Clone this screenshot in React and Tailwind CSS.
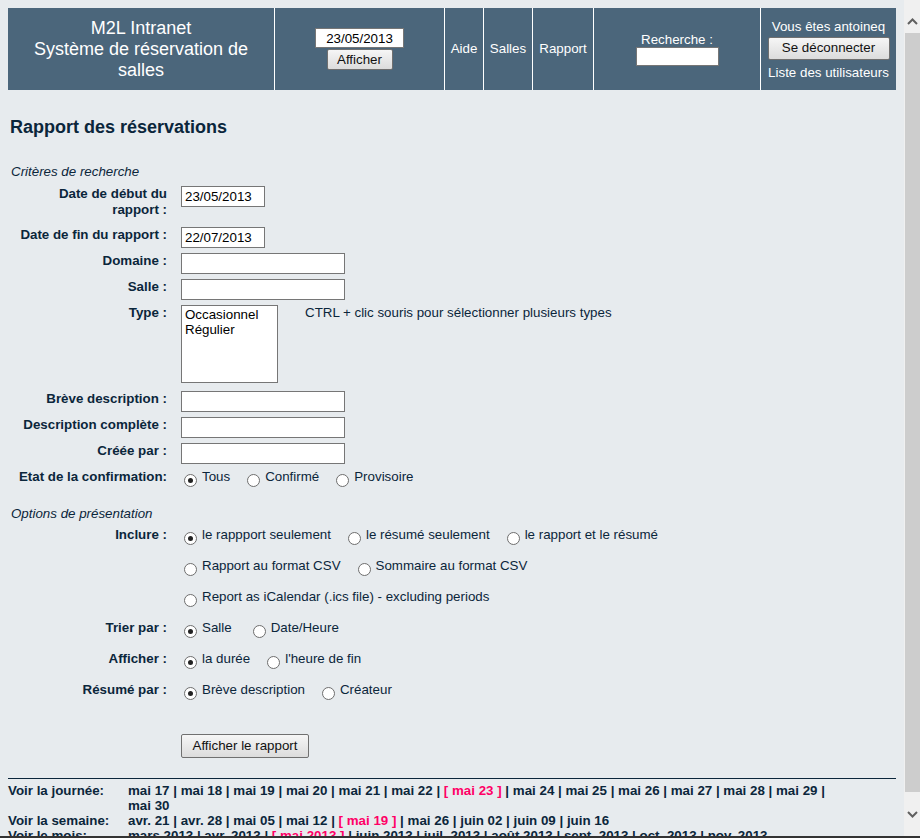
import React from "react";

const Radio = ({ checked }) => (
  <span className="mt-[5px] ml-[3px] mr-[5px] flex h-[13px] w-[13px] shrink-0 items-center justify-center rounded-full border border-[#6e6e6e] bg-white">
    {checked ? <span className="h-[5px] w-[5px] rounded-full bg-[#222]" /> : null}
  </span>
);

const Opt = ({ checked, children, wide }) => (
  <span className={wide ? "mr-[18px] flex items-start" : "mr-[14px] flex items-start"}>
    <Radio checked={checked} />
    <span className="leading-[16px] whitespace-nowrap">{children}</span>
  </span>
);

const Label = ({ children }) => (
  <div className="ml-[9px] mr-[14px] w-[150px] shrink-0 text-right font-bold leading-[16px]">{children}</div>
);

const Field = ({ value, short }) => (
  <input
    readOnly
    value={value || ""}
    className={
      short
        ? "h-[21px] w-[84px] shrink-0 border border-[#767676] bg-white px-[3px] text-[13.33px] text-black outline-none"
        : "h-[21px] w-[164px] shrink-0 border border-[#767676] bg-white px-[3px] text-[13.33px] text-black outline-none"
    }
  />
);

const Sep = () => <span> | </span>;
const Cur = ({ children }) => <span className="text-[#ff0066]">[ {children} ]</span>;

const NavLine = ({ items }) =>
  items.map((it, i) => (
    <React.Fragment key={i}>
      {i > 0 ? <Sep /> : null}
      {it.startsWith("*") ? <Cur>{it.slice(1)}</Cur> : <span>{it}</span>}
    </React.Fragment>
  ));

const Chevron = ({ down }) => (
  <svg width="11" height="7" viewBox="0 0 11 7">
    <polyline
      points={down ? "1,1 5.5,5.5 10,1" : "1,6 5.5,1.5 10,6"}
      fill="none"
      stroke="#606060"
      strokeWidth="2"
    />
  </svg>
);

const Btn = ({ children, cls }) => (
  <div
    className={
      "flex items-center justify-center rounded-[2px] border border-[#707070] bg-linear-to-b from-[#f6f6f6] to-[#dcdcdc] text-[13.33px] text-[#111] " +
      cls
    }
  >
    {children}
  </div>
);

export default function App() {
  return (
    <div className="flex h-[838px] w-[920px] flex-col overflow-hidden bg-[#e7ebee] font-['Liberation_Sans',Arial,sans-serif] text-[13.33px] text-[#0b263b]">
      <div className="flex h-[836px] overflow-hidden">
        <div className="w-[904px] shrink-0 overflow-hidden px-[8px] pt-[8px]">
          {/* Header banner */}
          <div className="flex h-[82px] bg-[#4b667b] text-white">
            <div className="flex w-[266px] shrink-0 items-center justify-center text-center text-[18px] leading-[21px]">
              <div>
                M2L Intranet
                <br />
                Système de réservation de
                <br />
                salles
              </div>
            </div>
            <div className="flex w-[170px] shrink-0 flex-col items-center justify-center border-l border-white">
              <input
                readOnly
                value="23/05/2013"
                className="h-[20px] w-[89px] border border-[#767676] bg-white text-center text-[13.33px] text-black outline-none"
              />
              <Btn cls="mt-[1px] h-[21px] w-[66px]">Afficher</Btn>
            </div>
            <div className="flex w-[39px] shrink-0 items-center justify-center border-l border-white">Aide</div>
            <div className="flex w-[49px] shrink-0 items-center justify-center border-l border-white">Salles</div>
            <div className="flex w-[61px] shrink-0 items-center justify-center border-l border-white">Rapport</div>
            <div className="flex w-[167px] shrink-0 flex-col items-center justify-center border-l border-white">
              <div className="leading-[15px]">Recherche :</div>
              <div className="h-[19px] w-[83px] border border-[#767676] bg-white" />
            </div>
            <div className="flex flex-1 flex-col items-center justify-center border-l border-white">
              <div className="leading-[15px]">Vous êtes antoineq</div>
              <Btn cls="mt-[3px] h-[23px] w-[122px]">Se déconnecter</Btn>
              <div className="mt-[5px] leading-[15px]">Liste des utilisateurs</div>
            </div>
          </div>

          <h2 className="mt-[27px] ml-[2px] text-[18px] font-bold leading-[21px]">Rapport des réservations</h2>

          <div className="mt-[26px] ml-[3px] italic leading-[16px]">Critères de recherche</div>

          <div className="mt-[6px] flex items-start">
            <Label>
              Date de début du
              <br />
              rapport&nbsp;:
            </Label>
            <Field short value="23/05/2013" />
          </div>
          <div className="mt-[9px] flex items-start">
            <Label>Date de fin du rapport :</Label>
            <Field short value="22/07/2013" />
          </div>
          <div className="mt-[5px] flex items-start">
            <Label>Domaine :</Label>
            <Field />
          </div>
          <div className="mt-[5px] flex items-start">
            <Label>Salle :</Label>
            <Field />
          </div>
          <div className="mt-[5px] flex items-start">
            <Label>Type :</Label>
            <div className="h-[78px] w-[97px] shrink-0 border border-[#767676] bg-white px-[3px] pt-[1px] leading-[15px] text-black">
              <div>Occasionnel</div>
              <div>Régulier</div>
            </div>
            <div className="ml-[27px] leading-[16px]">CTRL + clic souris pour sélectionner plusieurs types</div>
          </div>
          <div className="mt-[8px] flex items-start">
            <Label>Brève description :</Label>
            <Field />
          </div>
          <div className="mt-[5px] flex items-start">
            <Label>Description complète :</Label>
            <Field />
          </div>
          <div className="mt-[5px] flex items-start">
            <Label>Créée par :</Label>
            <Field />
          </div>
          <div className="mt-[5px] flex h-[18px] items-start">
            <Label>Etat de la confirmation:</Label>
            <div className="flex">
              <Opt checked>Tous</Opt>
              <Opt>Confirmé</Opt>
              <Opt>Provisoire</Opt>
            </div>
          </div>

          <div className="mt-[19px] ml-[3px] italic leading-[16px]">Options de présentation</div>

          <div className="mt-[5px] flex h-[31px] items-start">
            <Label>Inclure :</Label>
            <div className="flex">
              <Opt checked>le rappport seulement</Opt>
              <Opt>le résumé seulement</Opt>
              <Opt>le rapport et le résumé</Opt>
            </div>
          </div>
          <div className="flex h-[31px] items-start">
            <Label />
            <div className="flex">
              <Opt>Rapport au format CSV</Opt>
              <Opt>Sommaire au format CSV</Opt>
            </div>
          </div>
          <div className="flex h-[31px] items-start">
            <Label />
            <div className="flex">
              <Opt>Report as iCalendar (.ics file) - excluding periods</Opt>
            </div>
          </div>
          <div className="flex h-[31px] items-start">
            <Label>Trier par :</Label>
            <div className="flex">
              <Opt checked wide>Salle</Opt>
              <Opt>Date/Heure</Opt>
            </div>
          </div>
          <div className="flex h-[31px] items-start">
            <Label>Afficher :</Label>
            <div className="flex">
              <Opt checked>la durée</Opt>
              <Opt>l'heure de fin</Opt>
            </div>
          </div>
          <div className="flex h-[31px] items-start">
            <Label>Résumé par :</Label>
            <div className="flex">
              <Opt checked>Brève description</Opt>
              <Opt>Créateur</Opt>
            </div>
          </div>

          <div className="mt-[21px] ml-[173px]">
            <Btn cls="h-[24px] w-[128px]">Afficher le rapport</Btn>
          </div>

          <div className="mt-[20px] h-[1px] bg-[#0b263b]" />

          <div className="mt-[4px] font-bold leading-[15px]">
            <div className="flex">
              <div className="w-[120px] shrink-0">Voir la journée:</div>
              <div>
                <NavLine
                  items={["mai 17", "mai 18", "mai 19", "mai 20", "mai 21", "mai 22", "*mai 23", "mai 24", "mai 25", "mai 26", "mai 27", "mai 28", "mai 29"]}
                />
                <span> |</span>
                <br />
                <span>mai 30</span>
              </div>
            </div>
            <div className="flex">
              <div className="w-[120px] shrink-0">Voir la semaine:</div>
              <div>
                <NavLine items={["avr. 21", "avr. 28", "mai 05", "mai 12", "*mai 19", "mai 26", "juin 02", "juin 09", "juin 16"]} />
              </div>
            </div>
            <div className="flex">
              <div className="w-[120px] shrink-0">Voir le mois:</div>
              <div>
                <NavLine
                  items={["mars 2013", "avr. 2013", "*mai 2013", "juin 2013", "juil. 2013", "août 2013", "sept. 2013", "oct. 2013", "nov. 2013"]}
                />
              </div>
            </div>
          </div>
        </div>

        {/* Scrollbar */}
        <div className="flex w-[16px] shrink-0 flex-col bg-[#f0f0f0]">
          <div className="flex h-[33px] items-start justify-center pt-[18px]">
            <Chevron />
          </div>
          <div className="ml-[1px] h-[759px] bg-[#cdcdcd]" />
          <div className="mt-[19px] flex justify-center">
            <Chevron down />
          </div>
        </div>
      </div>
      <div className="h-[2px] bg-[#333333]" />
    </div>
  );
}
